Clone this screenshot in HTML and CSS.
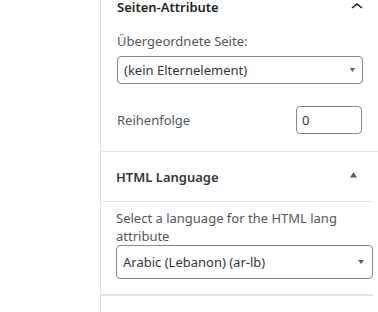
FILE: index.html
```html
<!DOCTYPE html>
<html lang="de">
<head>
  <meta charset="UTF-8">
  <title>Seiten-Attribute</title>
  <link rel="stylesheet" href="styles.css">
</head>
<body>
  <div class="sidebar">
    <div class="panel">
      <section class="box box-attrs">
        <div class="box-head">
          <h2>Seiten-Attribute</h2>
          <svg class="chevron" width="24" height="24" viewBox="0 0 24 24"><path d="M6.5 12.4L12 8l5.5 4.4-.9 1.2L12 10l-4.6 3.6-.9-1.2z"/></svg>
        </div>
        <div class="field">
          <label>Übergeordnete Seite:</label>
          <div class="select select-parent">
            <span>(kein Elternelement)</span>
            <svg class="arrow" width="5" height="4" viewBox="0 0 5 4"><path d="M0 0h5L2.5 4z"/></svg>
          </div>
        </div>
        <div class="row">
          <label>Reihenfolge</label>
          <div class="input">0</div>
        </div>
      </section>

      <section class="box box-lang">
        <div class="box-head">
          <h2>HTML Language</h2>
          <svg class="toggle" width="7" height="6" viewBox="0 0 7 6"><path d="M3.5 0L7 5.5H0z"/></svg>
        </div>
        <div class="box-body">
          <p>Select a language for the HTML lang attribute</p>
          <div class="select select-lang">
            <span>Arabic (Lebanon) (ar-lb)</span>
            <svg class="arrow" width="6" height="4" viewBox="0 0 6 4"><path d="M0 0h6L3 4z"/></svg>
          </div>
        </div>
      </section>
    </div>
  </div>
</body>
</html>
```

FILE: styles.css
```css
body {
  margin: 0;
  background: #fff;
  font-family: "Noto Sans", "Open Sans", sans-serif;
  font-size: 13px;
  line-height: 18px;
  overflow: hidden;
}

.sidebar {
  display: flex;
  height: 312px;
}

.panel {
  margin-left: 100px;
  width: 290px;
  flex-shrink: 0;
  border-left: 1px solid #e2e4e7;
}

.box h2 {
  margin: 0;
  font-size: 13px;
  font-weight: 600;
  line-height: 18px;
}

/* Seiten-Attribute */
.box-attrs {
  margin-top: -2px;
  padding: 0 16px 17px;
  width: 246px;
  border-bottom: 1px solid #e2e4e7;
}

.box-attrs .box-head {
  display: flex;
  justify-content: space-between;
  align-items: flex-start;
  height: 18px;
}

.box-attrs h2 {
  color: #1e1e1e;
}

.chevron {
  margin: -3px -6px 0 0;
  fill: #1e1e1e;
}

.field {
  margin-top: 16px;
}

.field label,
.row label {
  display: block;
  color: #50575e;
}

.select {
  display: flex;
  justify-content: space-between;
  align-items: center;
  box-sizing: border-box;
  border: 1px solid #7e8993;
  border-radius: 4px;
  color: #32373c;
  background: #fff;
}

.select-parent {
  margin-top: 6px;
  height: 28px;
  padding: 0 7px 0 6px;
}

.arrow {
  fill: #555d66;
}

.row {
  display: flex;
  justify-content: space-between;
  align-items: center;
  margin-top: 22px;
}

.input {
  box-sizing: border-box;
  width: 66px;
  height: 28px;
  margin-right: 1px;
  padding: 4px 5px;
  border: 1px solid #7e8993;
  border-radius: 4px;
  color: #32373c;
}

/* HTML Language */
.box-lang {
  width: 272px;
  border-bottom: 2px solid #e2e4e7;
}

.box-lang .box-head {
  display: flex;
  justify-content: space-between;
  align-items: center;
  padding: 16px 16px 15px 15px;
  border-bottom: 1px solid #e2e4e7;
}

.box-lang h2 {
  color: #32373c;
}

.toggle {
  margin: -4px 0 0 0;
  fill: #555d66;
}

.box-body {
  padding: 7px 0 15px 15px;
}

.box-body p {
  margin: 0;
  color: #50575e;
}

.select-lang {
  height: 34px;
  padding: 0 8px 0 6px;
}
```
